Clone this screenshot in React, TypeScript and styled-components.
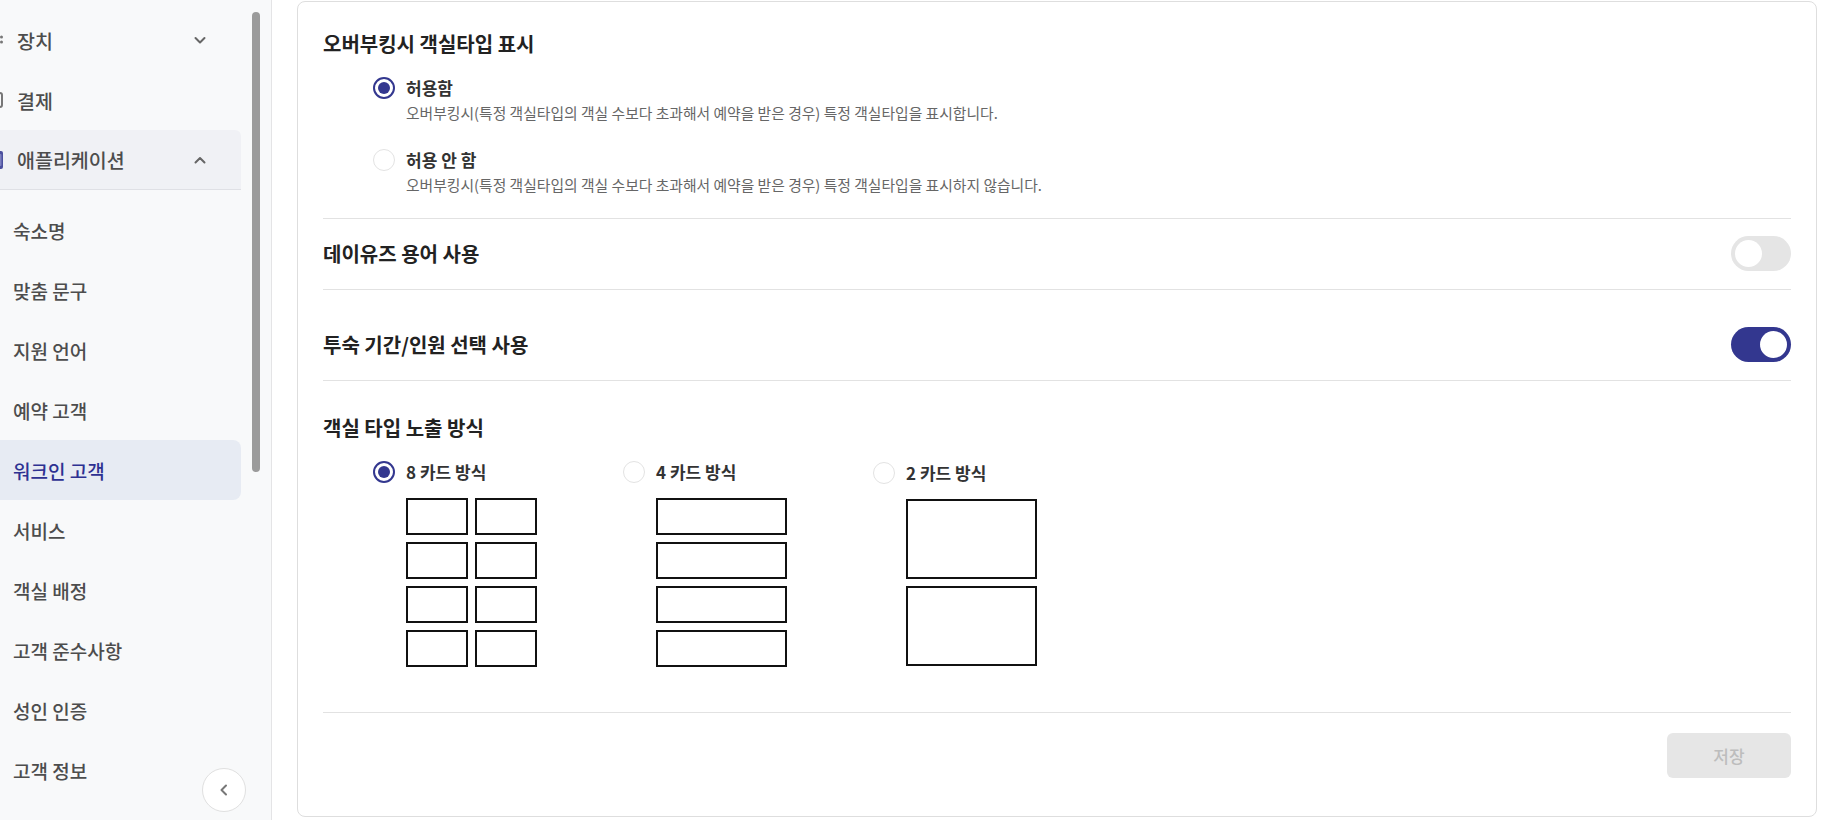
import React from "react";
import styled, { createGlobalStyle, css } from "styled-components";

const GlobalStyle = createGlobalStyle`
  * { box-sizing: border-box; }
  html, body { margin: 0; padding: 0; background: #ffffff; }
  body {
    font-family: "Noto Sans CJK KR", "Noto Sans", sans-serif;
    color: #222;
    overflow: hidden;
  }
`;

const NAVY = "#33378f";

const Page = styled.div`
  display: flex;
  width: 1830px;
  height: 820px;
`;

/* ---------- Sidebar ---------- */
const Sidebar = styled.aside`
  position: relative;
  width: 272px;
  flex: 0 0 272px;
  height: 100%;
  background: #f8f9fa;
  border-right: 1px solid #e4e4e6;
  padding-top: 10px;
  overflow: hidden;
`;

const NavList = styled.ul`
  list-style: none;
  margin: 0;
  padding: 0;
  width: 241px;
`;

const SubList = styled.ul`
  list-style: none;
  margin: 0;
  padding: 10px 0 0;
`;

const TopItem = styled.li<{ $expanded?: boolean }>`
  display: flex;
  align-items: center;
  height: 60px;
  padding: 0 33px 0 0;
  font-size: 19.5px;
  font-weight: 500;
  color: #4d4d4d;
  ${(p) =>
    p.$expanded &&
    css`
      background: #f0f1f5;
      border-bottom: 1px solid #dfe0e5;
      border-radius: 0 6px 0 0;
    `}
`;

const NavIcon = styled.span`
  display: inline-flex;
  width: 18px;
  height: 20px;
  margin-left: -15px;
  margin-right: 14px;
  flex: 0 0 18px;
`;

const NavLabel = styled.span`
  flex: 1;
`;

const Chevron = styled.svg`
  width: 16px;
  height: 16px;
  color: #666;
`;

const SubItem = styled.li<{ $active?: boolean }>`
  display: flex;
  align-items: center;
  height: 60px;
  padding-left: 13px;
  font-size: 19px;
  font-weight: 500;
  color: #4d4d4d;
  border-radius: 0 8px 8px 0;
  ${(p) =>
    p.$active &&
    css`
      background: #e7ebf3;
      color: #2e3192;
    `}
`;

const ScrollThumb = styled.div`
  position: absolute;
  top: 12px;
  left: 252px;
  width: 8px;
  height: 460px;
  border-radius: 4px;
  background: #9b9b9b;
`;

const CollapseButton = styled.button`
  position: absolute;
  left: 202px;
  top: 768px;
  width: 44px;
  height: 44px;
  border-radius: 50%;
  border: 1px solid #e0e0e0;
  background: #fff;
  display: flex;
  align-items: center;
  justify-content: center;
  padding: 0;
  color: #777;
`;

/* ---------- Main ---------- */
const Main = styled.main`
  flex: 1;
  height: 100%;
  padding: 1px 13px 3px 25px;
`;

const Card = styled.div`
  height: 100%;
  border: 1px solid #dedede;
  border-radius: 8px;
  padding: 0 25px;
  display: flex;
  flex-direction: column;
`;

const Section = styled.section<{ $pt: number; $pb: number }>`
  padding: ${(p) => p.$pt}px 0 ${(p) => p.$pb}px;
  border-bottom: 1px solid #e2e2e2;
`;

const Heading = styled.h3`
  margin: 0;
  font-size: 20px;
  line-height: 26px;
  font-weight: 700;
  color: #222;
`;

const OptionList = styled.div`
  display: flex;
  flex-direction: column;
  gap: 26px;
  margin: 20px 0 0 50px;
`;

const Option = styled.div`
  display: grid;
  grid-template-columns: 22px auto;
  column-gap: 11px;
  align-items: center;
`;

const Radio = styled.span<{ $checked?: boolean }>`
  width: 22px;
  height: 22px;
  border-radius: 50%;
  display: inline-flex;
  align-items: center;
  justify-content: center;
  ${(p) =>
    p.$checked
      ? css`
          border: 2px solid ${NAVY};
          &::after {
            content: "";
            width: 12px;
            height: 12px;
            border-radius: 50%;
            background: ${NAVY};
          }
        `
      : css`
          border: 1px solid #e3e3e3;
          background: #fff;
        `}
`;

const OptionLabel = styled.span`
  font-size: 17px;
  line-height: 22px;
  font-weight: 700;
  color: #333;
`;

const OptionDesc = styled.span`
  grid-column: 2;
  margin-top: 4px;
  font-size: 14.8px;
  line-height: 20px;
  color: #666;
`;

const ToggleRow = styled.div<{ $pt: number }>`
  display: flex;
  align-items: center;
  justify-content: space-between;
  padding: ${(p) => p.$pt}px 0 18px;
  border-bottom: 1px solid #e2e2e2;
`;

const Toggle = styled.span<{ $on?: boolean }>`
  position: relative;
  width: 60px;
  height: 35px;
  border-radius: 18px;
  background: ${(p) => (p.$on ? NAVY : "#e5e5e5")};
  &::after {
    content: "";
    position: absolute;
    top: 4px;
    left: ${(p) => (p.$on ? "29px" : "4px")};
    width: 27px;
    height: 27px;
    border-radius: 50%;
    background: #fff;
  }
`;

const LayoutChoices = styled.div`
  display: flex;
  margin: 20px 0 0 50px;
`;

const LayoutChoice = styled.div`
  width: 250px;
  display: grid;
  grid-template-columns: 22px auto;
  column-gap: 11px;
  row-gap: 15px;
  align-items: center;
`;

const Diagram = styled.div<{ $cols: number }>`
  grid-column: 2;
  display: grid;
  grid-template-columns: repeat(${(p) => p.$cols}, ${(p) => (p.$cols === 2 ? "62px" : "131px")});
  column-gap: 7px;
  row-gap: 7px;
  align-self: start;
`;

const CardBox = styled.div<{ $h: number }>`
  height: ${(p) => p.$h}px;
  border: 2px solid #111;
  background: #fff;
`;

const Footer = styled.div`
  display: flex;
  justify-content: flex-end;
  padding-top: 20px;
`;

const SaveButton = styled.button`
  width: 124px;
  height: 45px;
  border: none;
  border-radius: 6px;
  background: #e6e6e6;
  color: #bdbdbd;
  font-family: inherit;
  font-size: 17px;
  font-weight: 500;
`;

const ChevronDown = () => (
  <Chevron viewBox="0 0 16 16" fill="none" stroke="currentColor" strokeWidth="2" strokeLinecap="round" strokeLinejoin="round">
    <path d="M3.5 6l4.5 4.5L12.5 6" />
  </Chevron>
);
const ChevronUp = () => (
  <Chevron viewBox="0 0 16 16" fill="none" stroke="currentColor" strokeWidth="2" strokeLinecap="round" strokeLinejoin="round">
    <path d="M3.5 10.5L8 6l4.5 4.5" />
  </Chevron>
);

const subItems = [
  "숙소명",
  "맞춤 문구",
  "지원 언어",
  "예약 고객",
  "워크인 고객",
  "서비스",
  "객실 배정",
  "고객 준수사항",
  "성인 인증",
  "고객 정보",
];

const layouts = [
  { label: "8 카드 방식", cols: 2, count: 8, h: 37, checked: true },
  { label: "4 카드 방식", cols: 1, count: 4, h: 37, checked: false },
  { label: "2 카드 방식", cols: 1, count: 2, h: 80, checked: false },
];

export default function App() {
  return (
    <>
      <GlobalStyle />
      <Page>
        <Sidebar>
          <NavList>
            <TopItem>
              <NavIcon>
                <svg width="18" height="20" viewBox="0 0 18 20">
                  <circle cx="16.5" cy="7" r="1.5" fill="#777" />
                  <circle cx="16.5" cy="12" r="1.5" fill="#777" />
                </svg>
              </NavIcon>
              <NavLabel>장치</NavLabel>
              <ChevronDown />
            </TopItem>
            <TopItem>
              <NavIcon>
                <svg width="18" height="20" viewBox="0 0 18 20">
                  <rect x="1" y="3" width="16" height="14" rx="2" fill="none" stroke="#777" strokeWidth="2" />
                </svg>
              </NavIcon>
              <NavLabel>결제</NavLabel>
            </TopItem>
            <TopItem $expanded>
              <NavIcon>
                <svg width="18" height="20" viewBox="0 0 18 20">
                  <rect x="1" y="1" width="17" height="18" rx="2" fill="#4b4f9e" />
                  <rect x="4" y="4" width="12.5" height="12" rx="1" fill="#7d80c0" />
                </svg>
              </NavIcon>
              <NavLabel>애플리케이션</NavLabel>
              <ChevronUp />
            </TopItem>
            <li>
              <SubList>
                {subItems.map((s) => (
                  <SubItem key={s} $active={s === "워크인 고객"}>
                    {s}
                  </SubItem>
                ))}
              </SubList>
            </li>
          </NavList>
          <ScrollThumb />
          <CollapseButton aria-label="사이드바 접기">
            <svg width="16" height="16" viewBox="0 0 16 16" fill="none" stroke="currentColor" strokeWidth="2" strokeLinecap="round" strokeLinejoin="round">
              <path d="M10 3.5L5.5 8l4.5 4.5" />
            </svg>
          </CollapseButton>
        </Sidebar>

        <Main>
          <Card>
            <Section $pt={29} $pb={23}>
              <Heading>오버부킹시 객실타입 표시</Heading>
              <OptionList>
                <Option>
                  <Radio $checked />
                  <OptionLabel>허용함</OptionLabel>
                  <OptionDesc>
                    오버부킹시(특정 객실타입의 객실 수보다 초과해서 예약을 받은 경우) 특정 객실타입을 표시합니다.
                  </OptionDesc>
                </Option>
                <Option>
                  <Radio />
                  <OptionLabel>허용 안 함</OptionLabel>
                  <OptionDesc>
                    오버부킹시(특정 객실타입의 객실 수보다 초과해서 예약을 받은 경우) 특정 객실타입을 표시하지 않습니다.
                  </OptionDesc>
                </Option>
              </OptionList>
            </Section>

            <ToggleRow $pt={17}>
              <Heading>데이유즈 용어 사용</Heading>
              <Toggle />
            </ToggleRow>

            <ToggleRow $pt={37}>
              <Heading>투숙 기간/인원 선택 사용</Heading>
              <Toggle $on />
            </ToggleRow>

            <Section $pt={34} $pb={45}>
              <Heading>객실 타입 노출 방식</Heading>
              <LayoutChoices>
                {layouts.map((l) => (
                  <LayoutChoice key={l.label}>
                    <Radio $checked={l.checked} />
                    <OptionLabel>{l.label}</OptionLabel>
                    <Diagram $cols={l.cols}>
                      {Array.from({ length: l.count }).map((_, i) => (
                        <CardBox key={i} $h={l.h} />
                      ))}
                    </Diagram>
                  </LayoutChoice>
                ))}
              </LayoutChoices>
            </Section>

            <Footer>
              <SaveButton disabled>저장</SaveButton>
            </Footer>
          </Card>
        </Main>
      </Page>
    </>
  );
}
